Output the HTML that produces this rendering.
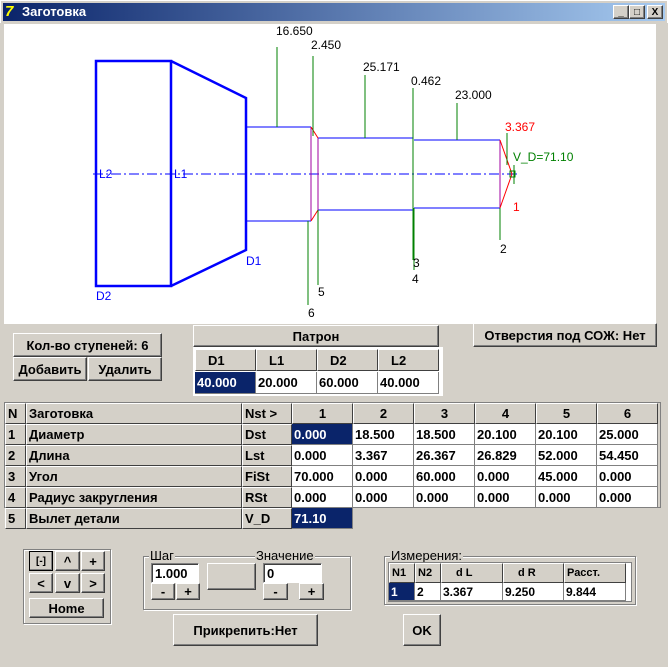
<!DOCTYPE html><html><head><meta charset="utf-8"><style>
*{box-sizing:border-box;margin:0;padding:0}
body{width:668px;height:667px;background:#d4d0c8;position:relative;overflow:hidden;font-family:"Liberation Sans",sans-serif;font-size:13px;font-weight:bold;color:#000}
.a{position:absolute}
.btn{position:absolute;background:#d4d0c8;border:1px solid;border-color:#fff #404040 #404040 #fff;box-shadow:inset -1px -1px #808080;display:flex;align-items:center;justify-content:center;white-space:nowrap}
.c{position:absolute;border-right:1px solid #808080;border-bottom:1px solid #808080;padding-left:2px;display:flex;align-items:center;white-space:nowrap;overflow:hidden}
.h{background:#d4d0c8;border:1px solid;border-color:#fff #404040 #404040 #fff}
.w{background:#fff}
.s{background:#0a246a;color:#fff}
.grp{position:absolute;border:1px solid #808080;box-shadow:1px 1px #fff, inset 1px 1px #fff}
.lbl{position:absolute;background:#d4d0c8;font-weight:normal;padding:0 1px;line-height:13px}
.edit{position:absolute;background:#fff;border:1px solid;border-color:#808080 #fff #fff #808080;box-shadow:inset 1px 1px #404040;padding-left:3px;display:flex;align-items:center}
</style></head><body>
<div class="a" style="left:0;top:0;width:668px;height:23px;border:1px solid #fff;border-bottom:none"></div>
<div class="a" style="left:3px;top:3px;width:662px;height:18px;background:linear-gradient(90deg,#0a246a,#a6caf0)"></div>
<div class="a" style="left:5px;top:3px;color:#ff0;font-size:15px;font-style:italic">7</div>
<div class="a" style="left:22px;top:4px;color:#fff;font-size:13px">Заготовка</div>
<div class="btn" style="left:613px;top:5px;width:16px;height:14px;font-size:10px">_</div>
<div class="btn" style="left:629px;top:5px;width:16px;height:14px;font-size:10px">□</div>
<div class="btn" style="left:647px;top:5px;width:16px;height:14px;font-size:10px">X</div>
<div class="a" style="left:4px;top:24px;width:652px;height:300px;background:#fff"></div>
<svg class="a" style="left:0;top:0;font-weight:normal" width="668" height="330" font-family="Liberation Sans" font-size="12">
<g fill="none" stroke="#0000ff">
<path d="M96 61H171V286H96Z M171 61L246 98V250L171 286" stroke-width="2.5"/>
<path d="M246 163V127H311 M246 221H311 M318 138H413 M318 210H413 M414 140H500 M414 208H500"/>
<path d="M93 174H518" stroke-dasharray="10 3 2 3"/>
</g>
<g stroke="#a000a0" fill="none"><path d="M311 127V221 M318 138V210 M413 138V211 M500 140V208"/></g>
<g stroke="#f00" fill="none"><path d="M311 127L318 138 M311 221L318 210 M500 140L512 174L500 208"/></g>
<g stroke="#008000" fill="none"><path d="M277 47V127 M313 56V136 M365 75V138 M413 88V260 M457 103V140 M507 133V165 M514 165V184 M308 221V305 M318 210V285 M414 208V270 M500 208V240"/><rect x="510" y="171" width="5" height="6"/></g>
<g fill="#000"><text x="276" y="35">16.650</text><text x="311" y="49">2.450</text><text x="363" y="71">25.171</text><text x="411" y="85">0.462</text><text x="455" y="99">23.000</text><text x="500" y="253">2</text><text x="413" y="267">3</text><text x="412" y="283">4</text><text x="318" y="296">5</text><text x="308" y="317">6</text></g>
<text x="505" y="131" fill="#f00">3.367</text><text x="513" y="211" fill="#f00">1</text>
<text x="513" y="161" fill="#008000">V_D=71.10</text>
<g fill="#0000ff"><text x="99" y="178">L2</text><text x="174" y="178">L1</text><text x="246" y="265">D1</text><text x="96" y="300">D2</text></g>
</svg>
<div class="btn" style="left:13px;top:333px;width:149px;height:24px">Кол-во ступеней: 6</div>
<div class="btn" style="left:13px;top:357px;width:74px;height:24px">Добавить</div>
<div class="btn" style="left:88px;top:357px;width:74px;height:24px">Удалить</div>
<div class="btn" style="left:193px;top:325px;width:246px;height:22px">Патрон</div>
<div class="btn" style="left:473px;top:323px;width:184px;height:24px">Отверстия под СОЖ: Нет</div>
<div class="a" style="left:193px;top:347px;width:250px;height:49px;background:#fff;border:1px solid #fff"></div>
<div class="c h" style="left:195px;top:349px;width:61px;height:22px;padding-left:12px">D1</div>
<div class="c h" style="left:256px;top:349px;width:61px;height:22px;padding-left:12px">L1</div>
<div class="c h" style="left:317px;top:349px;width:61px;height:22px;padding-left:12px">D2</div>
<div class="c h" style="left:378px;top:349px;width:61px;height:22px;padding-left:12px">L2</div>
<div class="c s" style="left:195px;top:372px;width:61px;height:22px">40.000</div>
<div class="c w" style="left:256px;top:372px;width:61px;height:22px">20.000</div>
<div class="c w" style="left:317px;top:372px;width:61px;height:22px">60.000</div>
<div class="c w" style="left:378px;top:372px;width:61px;height:22px">40.000</div>
<div class="a" style="left:4px;top:402px;width:657px;height:106px;border:1px solid #808080"></div>
<div id="g"></div>
<div class="grp" style="left:23px;top:549px;width:88px;height:75px"></div>
<div class="btn" style="left:29px;top:551px;width:24px;height:20px;border:1px solid #000;font-size:10px">[-]</div>
<div class="btn" style="left:55px;top:551px;width:25px;height:20px">^</div>
<div class="btn" style="left:81px;top:551px;width:24px;height:20px">+</div>
<div class="btn" style="left:29px;top:573px;width:24px;height:20px">&lt;</div>
<div class="btn" style="left:55px;top:573px;width:25px;height:20px">v</div>
<div class="btn" style="left:81px;top:573px;width:24px;height:20px">&gt;</div>
<div class="btn" style="left:29px;top:598px;width:75px;height:20px">Home</div>
<div class="grp" style="left:143px;top:556px;width:208px;height:54px"></div>
<div class="lbl" style="left:149px;top:549px">Шаг</div>
<div class="lbl" style="left:255px;top:549px">Значение</div>
<div class="edit" style="left:151px;top:563px;width:48px;height:20px">1.000</div>
<div class="edit" style="left:263px;top:563px;width:59px;height:20px">0</div>
<div class="btn" style="left:207px;top:563px;width:49px;height:27px"></div>
<div class="btn" style="left:151px;top:583px;width:24px;height:17px">-</div>
<div class="btn" style="left:176px;top:583px;width:24px;height:17px">+</div>
<div class="btn" style="left:263px;top:583px;width:25px;height:17px">-</div>
<div class="btn" style="left:299px;top:583px;width:25px;height:17px">+</div>
<div class="grp" style="left:384px;top:556px;width:252px;height:49px"></div>
<div class="lbl" style="left:390px;top:549px">Измерения:</div>
<div class="a" style="left:388px;top:562px;width:244px;height:40px;background:#fff;border:1px solid #808080"></div>
<div class="c h" style="left:389px;top:563px;width:26px;height:20px;font-size:11px">N1</div>
<div class="c h" style="left:415px;top:563px;width:26px;height:20px;font-size:11px">N2</div>
<div class="c h" style="left:441px;top:563px;width:62px;height:20px;font-size:11px;padding-left:14px">d L</div>
<div class="c h" style="left:503px;top:563px;width:61px;height:20px;font-size:11px;padding-left:14px">d R</div>
<div class="c h" style="left:564px;top:563px;width:62px;height:20px;font-size:11px">Расст.</div>
<div class="c s" style="left:389px;top:583px;width:26px;height:18px;font-size:12px">1</div>
<div class="c w" style="left:415px;top:583px;width:26px;height:18px;font-size:12px">2</div>
<div class="c w" style="left:441px;top:583px;width:62px;height:18px;font-size:12px">3.367</div>
<div class="c w" style="left:503px;top:583px;width:61px;height:18px;font-size:12px">9.250</div>
<div class="c w" style="left:564px;top:583px;width:62px;height:18px;font-size:12px">9.844</div>
<div class="btn" style="left:173px;top:614px;width:145px;height:32px">Прикрепить:Нет</div>
<div class="btn" style="left:403px;top:614px;width:38px;height:32px">OK</div>
<script>
var cols=[5,26,242,292,353,414,475,536,597,658];
var rows=[["N","Заготовка","Nst >","1","2","3","4","5","6"],
["1","Диаметр","Dst","0.000","18.500","18.500","20.100","20.100","25.000"],
["2","Длина","Lst","0.000","3.367","26.367","26.829","52.000","54.450"],
["3","Угол","FiSt","70.000","0.000","60.000","0.000","45.000","0.000"],
["4","Радиус закругления","RSt","0.000","0.000","0.000","0.000","0.000","0.000"],
["5","Вылет детали","V_D","71.10"]];
var h="";
rows.forEach(function(r,i){var y=403+i*21;r.forEach(function(t,j){var cl=(i==0||j<3)?"h":"w";if((i==1&&j==3)||(i==5&&j==3))cl="s";
var st=(i==0&&j>=3)?"justify-content:center;padding:0":"";
h+='<div class="c '+cl+'" style="left:'+cols[j]+'px;top:'+y+'px;width:'+(cols[j+1]-cols[j])+'px;height:21px;'+st+'">'+t+'</div>';});});
document.getElementById("g").innerHTML=h;
</script>
</body></html>
